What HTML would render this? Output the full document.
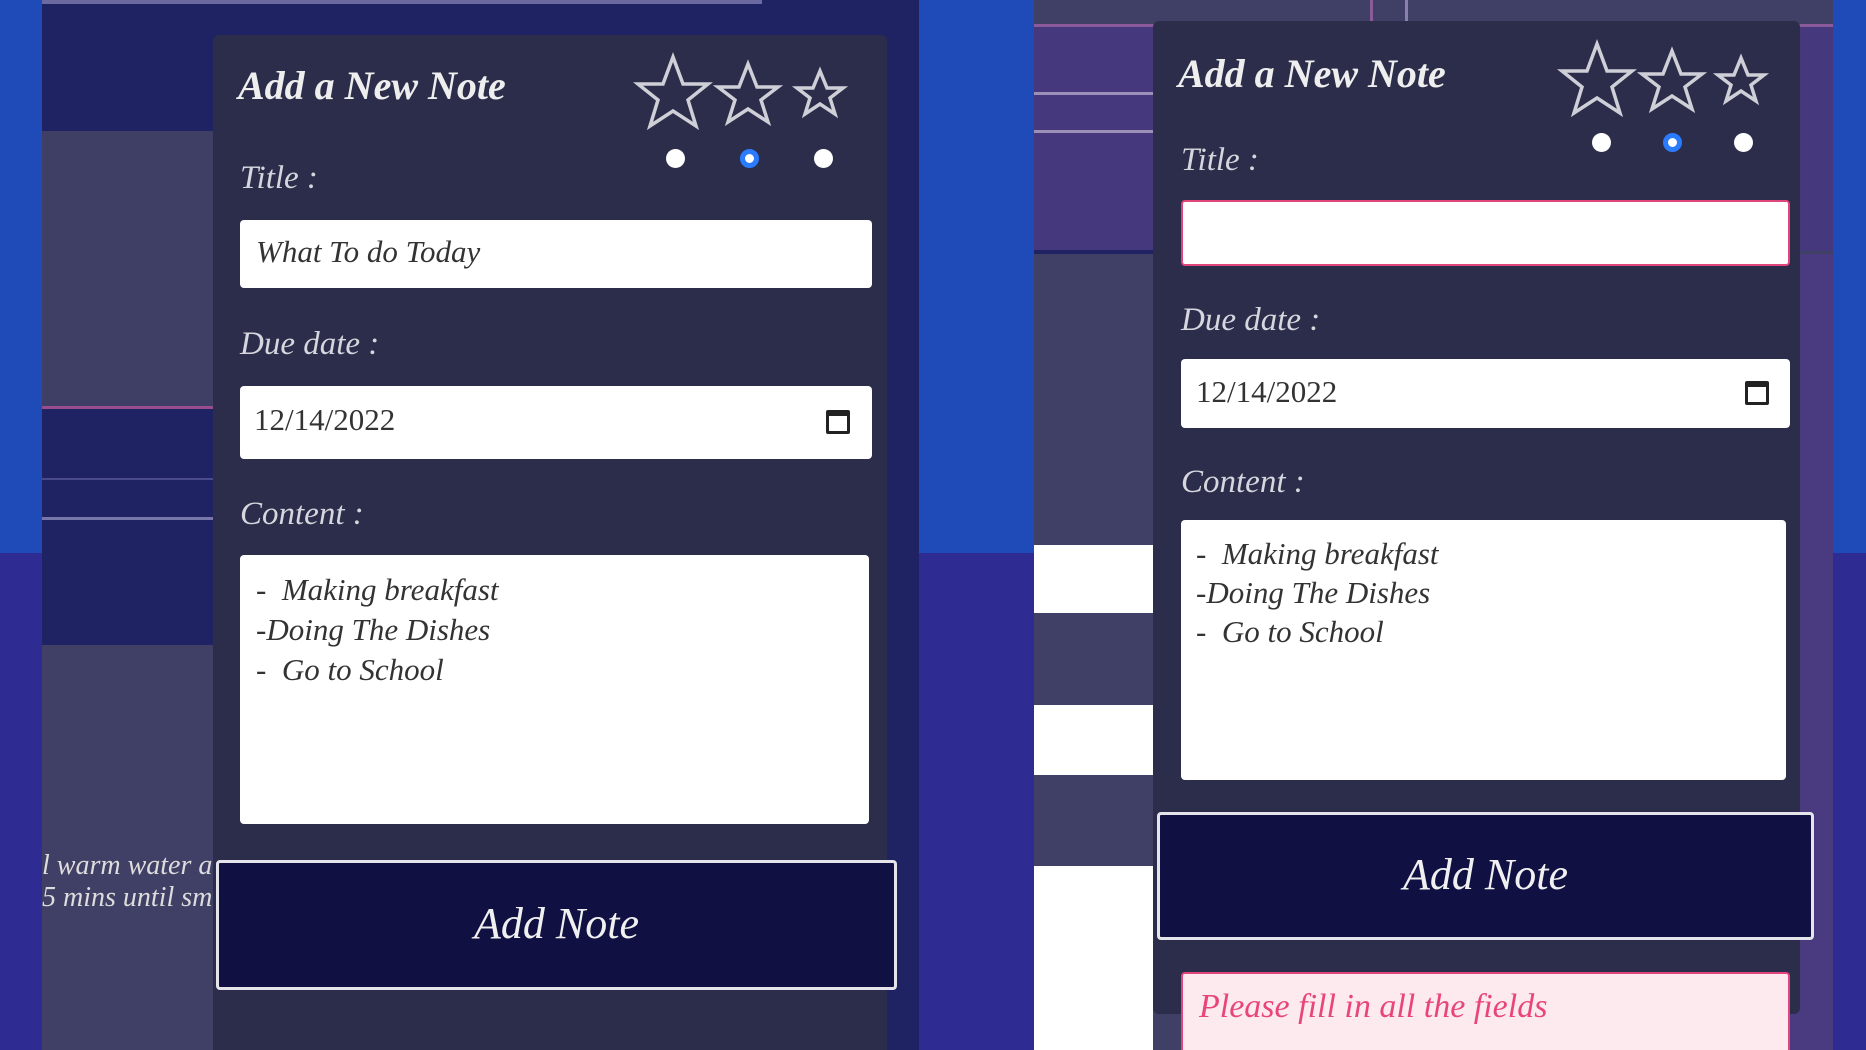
<!DOCTYPE html>
<html style="overflow:hidden;width:1866px;height:1050px"><head><meta charset="utf-8"><style>
*{margin:0;padding:0;box-sizing:border-box}
body{width:1866px;height:1050px;overflow:hidden;position:relative;background:#2e2b92;font-family:"Liberation Serif",serif;font-style:italic}
.a{position:absolute}
.lbl{position:absolute;color:#d6d6de;font-size:33px}
.h{position:absolute;color:#eee;font-size:40px;font-weight:bold}
.in{position:absolute;background:#fff;border-radius:4px}
.txt{position:absolute;color:#333;font-size:31px}
.btn{position:absolute;background:#111042;border:3px solid #e4e4ea;border-radius:4px;color:#f0f0f0;font-size:44px;text-align:center}
.radio{position:absolute;width:19px;height:19px;border-radius:50%;background:#fff}
.radio.on{background:#fff;border:5px solid #2b7bff}
.cal{position:absolute;width:24px;height:24px;border:3px solid #222;border-top-width:6px;border-radius:2px}
</style></head><body>
<div class="a" style="left:0;top:0;width:1866px;height:553px;background:#1f4bb8"></div>
<!-- left app area -->
<div class="a" style="left:42px;top:0;width:877px;height:1050px;background:#1f2263"></div>
<div class="a" style="left:42px;top:0;width:720px;height:4px;background:#6a6aa0"></div>
<div class="a" style="left:42px;top:131px;width:180px;height:277px;background:#3f3f66"></div>
<div class="a" style="left:42px;top:406px;width:180px;height:3px;background:#9a4d8e"></div>
<div class="a" style="left:42px;top:478px;width:180px;height:2px;background:#4a4a8a"></div>
<div class="a" style="left:42px;top:517px;width:180px;height:3px;background:#7777aa"></div>
<div class="a" style="left:42px;top:645px;width:180px;height:405px;background:#404066"></div>
<div class="a" style="left:42px;top:850px;color:#ddd;font-size:28px;white-space:nowrap;width:175px;overflow:hidden">l warm water a<br>5 mins until sm</div>
<!-- right app area -->
<div class="a" style="left:1034px;top:0;width:799px;height:1050px;background:#404066"></div>
<div class="a" style="left:1034px;top:24px;width:799px;height:3px;background:#8a5a9a"></div>
<div class="a" style="left:1034px;top:27px;width:799px;height:224px;background:#45387c"></div>
<div class="a" style="left:1034px;top:92px;width:130px;height:3px;background:#9a90b8"></div>
<div class="a" style="left:1034px;top:130px;width:130px;height:3px;background:#9a90b8"></div>
<div class="a" style="left:1034px;top:250px;width:130px;height:4px;background:#1f2263"></div>
<div class="a" style="left:1370px;top:0;width:3px;height:27px;background:#8a5a9a"></div>
<div class="a" style="left:1405px;top:0;width:3px;height:27px;background:#8a80b0"></div>
<div class="a" style="left:1730px;top:254px;width:103px;height:796px;background:#4a3a80"></div>
<div class="a" style="left:1034px;top:545px;width:119px;height:68px;background:#fff"></div>
<div class="a" style="left:1034px;top:705px;width:119px;height:70px;background:#fff"></div>
<div class="a" style="left:1034px;top:866px;width:119px;height:184px;background:#fff"></div>
<div class="a" style="left:1833px;top:553px;width:33px;height:497px;background:#2e2b92"></div>

<!-- left card -->
<div class="a" style="left:213px;top:35px;width:674px;height:1015px;background:#2b2d4a;border-radius:6px 6px 0 0"></div>
<div class="h" style="left:238px;top:62px">Add a New Note</div>
<svg class="a" style="left:600px;top:40px" width="260" height="110">
<g fill="none" stroke="#cfcfd8" stroke-width="3.5" stroke-linejoin="miter">
<polygon points="73,17 83,44 108,44 88,60 96,86 73,71 50,86 58,60 38,44 63,44"/>
<polygon points="148,24 157,47 178,47 161,60 168,82 148,69 128,82 135,60 118,47 139,47"/>
<polygon points="220,31 227,48 243,48 230,58 235,74 220,64 205,74 210,58 197,48 213,48"/>
</g></svg>
<div class="radio" style="left:666px;top:149px"></div>
<div class="radio on" style="left:740px;top:149px"></div>
<div class="radio" style="left:814px;top:149px"></div>
<div class="lbl" style="left:240px;top:160px">Title :</div>
<div class="in" style="left:240px;top:220px;width:632px;height:68px"></div>
<div class="txt" style="left:256px;top:234px">What To do Today</div>
<div class="lbl" style="left:240px;top:326px">Due date :</div>
<div class="in" style="left:240px;top:386px;width:632px;height:73px"></div>
<div class="txt" style="left:254px;top:402px;font-style:normal">12/14/2022</div>
<div class="cal" style="left:826px;top:410px"></div>
<div class="lbl" style="left:240px;top:496px">Content :</div>
<div class="in" style="left:240px;top:555px;width:629px;height:269px"></div>
<div class="txt" style="left:256px;top:570px;line-height:40px">- &nbsp;Making breakfast<br>-Doing The Dishes<br>- &nbsp;Go to School</div>
<div class="btn" style="left:216px;top:860px;width:681px;height:130px;line-height:122px">Add Note</div>

<!-- right card -->
<div class="a" style="left:1153px;top:21px;width:647px;height:993px;background:#2b2d4a;border-radius:6px"></div>
<div class="h" style="left:1178px;top:50px">Add a New Note</div>
<svg class="a" style="left:1524px;top:27px" width="260" height="110">
<g fill="none" stroke="#cfcfd8" stroke-width="3.5">
<polygon points="73,17 83,44 108,44 88,60 96,86 73,71 50,86 58,60 38,44 63,44"/>
<polygon points="148,24 157,47 178,47 161,60 168,82 148,69 128,82 135,60 118,47 139,47"/>
<polygon points="217,31 224,48 240,48 227,58 232,74 217,64 202,74 207,58 194,48 210,48"/>
</g></svg>
<div class="radio" style="left:1592px;top:133px"></div>
<div class="radio on" style="left:1663px;top:133px"></div>
<div class="radio" style="left:1734px;top:133px"></div>
<div class="lbl" style="left:1181px;top:142px">Title :</div>
<div class="in" style="left:1181px;top:200px;width:609px;height:66px;border:2px solid #e0457b"></div>
<div class="lbl" style="left:1181px;top:302px">Due date :</div>
<div class="in" style="left:1181px;top:359px;width:609px;height:69px"></div>
<div class="txt" style="left:1196px;top:374px;font-style:normal">12/14/2022</div>
<div class="cal" style="left:1745px;top:381px"></div>
<div class="lbl" style="left:1181px;top:464px">Content :</div>
<div class="in" style="left:1181px;top:520px;width:605px;height:260px"></div>
<div class="txt" style="left:1196px;top:534px;line-height:39px">- &nbsp;Making breakfast<br>-Doing The Dishes<br>- &nbsp;Go to School</div>
<div class="btn" style="left:1157px;top:812px;width:657px;height:128px;line-height:120px">Add Note</div>
<div class="a" style="left:1181px;top:972px;width:609px;height:78px;background:#fdeaee;border:2px solid #e0457b;border-bottom:none;border-radius:4px 4px 0 0;color:#e8457c;font-size:34px;padding:14px 0 0 16px">Please fill in all the fields</div>
</body></html>
